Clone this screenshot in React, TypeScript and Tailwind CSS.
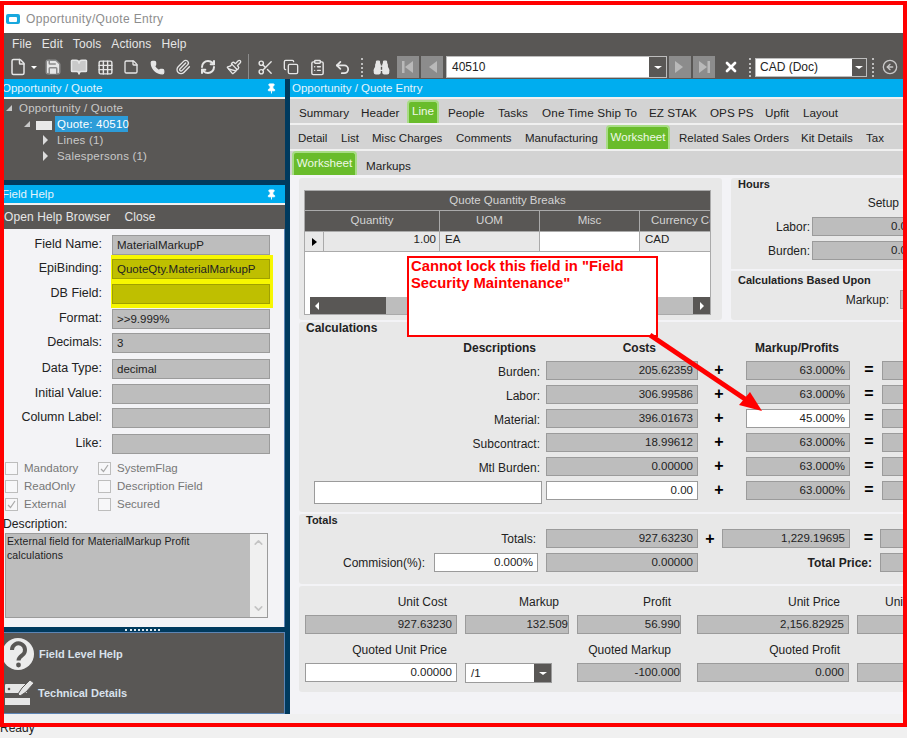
import React from "react";
import { File, Save, BookOpen, Grid3x3, StickyNote, Phone, Paperclip, RefreshCw, Paintbrush, Scissors, Copy, ClipboardList, Undo2, Binoculars, X, CircleArrowLeft, Pin, ChevronUp, ChevronDown } from "lucide-react";

const fieldBase = "h-[19px] shrink-0 border border-[#9b9b9b] leading-[16px] overflow-hidden whitespace-nowrap";

function Gray({ w, children, left }: { w: string; children?: React.ReactNode; left?: boolean }) {
  return <div className={`${fieldBase} ${w} bg-[#bdbdbd] text-[#222] ${left ? "text-left pl-1" : "text-right pr-1"}`}>{children}</div>;
}
function White({ w, children }: { w: string; children?: React.ReactNode }) {
  return <div className={`${fieldBase} ${w} bg-white text-[#222] text-right pr-1`}>{children}</div>;
}
function Caret({ w }: { w: string }) {
  return (
    <div className={`${w} h-full bg-[#595755] flex items-center justify-center shrink-0`}>
      <div className="w-0 h-0 border-x-[4px] border-x-transparent border-t-[3px] border-t-white" />
    </div>
  );
}
function Slot({ w, children }: { w: string; children: React.ReactNode }) {
  return <div className={`${w} h-[22px] flex items-center justify-center shrink-0 text-[#e6e6e6]`}>{children}</div>;
}
function Nav({ dir, bar }: { dir: "l" | "r"; bar?: boolean }) {
  return (
    <div className="w-[22px] h-[22px] bg-[#8c8c8c] flex items-center justify-center shrink-0">
      <svg width="14" height="14" viewBox="0 0 14 14" fill="#b9b9b9">
        {dir === "l" ? <polygon points="12,1 12,13 4,7" /> : <polygon points="2,1 2,13 10,7" />}
        {bar && (dir === "l" ? <rect x="1" y="1" width="2.5" height="12" /> : <rect x="10.5" y="1" width="2.5" height="12" />)}
      </svg>
    </div>
  );
}
function Dots({ ml }: { ml: string }) {
  return <div className={`${ml} w-[2px] h-[19px] border-l-2 border-dotted border-[#bdbdbd] shrink-0`} />;
}
function Header({ text, pad }: { text: string; pad: string }) {
  return (
    <div className={`h-[18px] bg-[#00adef] text-[#e4f4fb] text-[11.5px] leading-[18px] flex items-center justify-between ${pad} shrink-0`}>
      <span>{text}</span>
    </div>
  );
}
function PinHeader({ text }: { text: string }) {
  return (
    <div className="h-[18px] bg-[#00adef] text-[#e4f4fb] text-[11.5px] leading-[18px] flex items-center justify-between pl-[2px] pr-[8px] shrink-0">
      <span>{text}</span>
      <Pin size={11} className="text-white" fill="white" />
    </div>
  );
}
function FormRow({ label, value, h, olive }: { label: string; value?: string; h: string; olive?: boolean }) {
  return (
    <div className={`flex ${h} items-start`}>
      <div className="w-[98px] text-right text-[#222] text-[12.5px] leading-[18px] whitespace-nowrap">{label}</div>
      <div className={`ml-[10px] w-[158px] h-[20px] border ${olive ? "border-[#a0a000] bg-[#bfbf00]" : "border-[#9b9b9b] bg-[#bdbdbd]"} pl-[4px] leading-[18px] text-[#222] relative z-10`}>{value}</div>
    </div>
  );
}
function Check({ label, on, ml }: { label: string; on?: boolean; ml?: string }) {
  return (
    <div className={`flex items-center h-[13px] text-[#777] text-[11.5px] ${ml ?? ""}`}>
      <div className="w-[13px] h-[13px] border border-[#bdbdbd] flex items-center justify-center bg-[#f7f7f9] shrink-0">
        {on && (
          <svg width="11" height="11" viewBox="0 0 11 11" fill="none" stroke="#a8a8a8" strokeWidth="1.2"><polyline points="2,6 4.5,8.5 9,2" /></svg>
        )}
      </div>
      <span className="ml-[6px]">{label}</span>
    </div>
  );
}
function Plus() {
  return <span className="text-[16px] font-bold leading-[18px] text-black">+</span>;
}
function Eq() {
  return <span className="text-[16px] font-bold leading-[18px] text-black">=</span>;
}
function CalcRow({ label, cost, markup, white }: { label: string; cost: string; markup: string; white?: boolean }) {
  return (
    <div className="flex h-[19px] mb-[5px] items-center">
      <div className="w-[241px] shrink-0 text-right text-[#222] text-[12px] pt-[2px]">{label}:</div>
      <div className="ml-[6px] shrink-0"><Gray w="w-[152px]">{cost}</Gray></div>
      <div className="w-[42px] ml-[6px] text-center pr-[12px] shrink-0"><Plus /></div>
      {white ? <White w="w-[104px]">{markup}</White> : <Gray w="w-[104px]">{markup}</Gray>}
      <div className="w-[32px] text-center pl-[6px] shrink-0"><Eq /></div>
      <Gray w="w-[30px]" />
    </div>
  );
}
function Tab({ w, children, active, tw }: { w: string; children: React.ReactNode; active?: boolean; tw?: string }) {
  if (active) {
    return (
      <div className={`${w} h-full shrink-0 bg-[#69bc2b] border-x-2 border-t-2 border-[#a8dc86] rounded-t-[4px] text-[#eef8e6] text-center ${tw ?? ""}`}>
        {children}
      </div>
    );
  }
  return <div className={`${w} shrink-0 text-[#222] whitespace-nowrap self-center ${tw ?? ""}`}>{children}</div>;
}

export default function App() {
  return (
    <div className="relative w-[907px] h-[738px] overflow-hidden bg-[#f0f0f0] text-[11.5px] flex flex-col" style={{ fontFamily: '"Liberation Sans", Arial, sans-serif' }}>
      {/* title bar */}
      <div className="h-[33px] bg-white flex items-center pl-[6px] pt-[5px] shrink-0">
        <div className="w-[14px] h-[10px] rounded-[2px] bg-[#18a8de] flex items-center justify-center">
          <div className="w-[8px] h-[5px] bg-white rounded-[1px]" />
        </div>
        <span className="ml-[6px] text-[12px] text-[#8d8d8d] tracking-[0.35px]">Opportunity/Quote Entry</span>
      </div>

      {/* menu + toolbar */}
      <div className="h-[46px] bg-[#595755] shrink-0 text-[#e6e6e6]">
        <div className="h-[22px] flex items-center pl-[12px] gap-[10px] text-[12px] tracking-[0.1px]">
          <span>File</span><span>Edit</span><span>Tools</span><span>Actions</span><span>Help</span>
        </div>
        <div className="h-[24px] flex items-center pl-[9px]">
          <Slot w="w-[18px]"><File size={18} /></Slot>
          <div className="ml-[4px] w-0 h-0 border-x-[3px] border-x-transparent border-t-[3px] border-t-white" />
          <Slot w="w-[18px] ml-[7px]"><Save size={18} fill="#e6e6e6" stroke="#8c8c8c" /></Slot>
          <Slot w="w-[18px] ml-[8px]"><BookOpen size={18} fill="#c9c9c9" /></Slot>
          <Slot w="w-[18px] ml-[8px]"><Grid3x3 size={17} /></Slot>
          <Slot w="w-[18px] ml-[8px]"><StickyNote size={16} /></Slot>
          <Slot w="w-[18px] ml-[8px]"><Phone size={15} fill="#e6e6e6" /></Slot>
          <Slot w="w-[18px] ml-[8px]"><Paperclip size={16} /></Slot>
          <Slot w="w-[18px] ml-[7px]"><RefreshCw size={16} strokeWidth={3} /></Slot>
          <Slot w="w-[18px] ml-[8px]"><Paintbrush size={16} /></Slot>
          <div className="ml-[5px] w-px h-[26px] bg-[#8c8c8c]" />
          <Slot w="w-[18px] ml-[7px]"><Scissors size={17} /></Slot>
          <Slot w="w-[18px] ml-[8px]"><Copy size={16} /></Slot>
          <Slot w="w-[18px] ml-[8px]"><ClipboardList size={17} /></Slot>
          <Slot w="w-[18px] ml-[7px]"><Undo2 size={17} strokeWidth={2.5} /></Slot>
          <Dots ml="ml-[10px]" />
          <Slot w="w-[18px] ml-[9px]"><Binoculars size={17} fill="#e6e6e6" /></Slot>
          <div className="ml-[7px]"><Nav dir="l" bar /></div>
          <div className="ml-[2px]"><Nav dir="l" /></div>
          <div className="ml-[3px] w-[221px] h-[22px] bg-white border border-[#bdbdbd] flex text-[#222] text-[12px] leading-[20px] shrink-0">
            <span className="flex-1 pl-[5px]">40510</span>
            <Caret w="w-[17px]" />
          </div>
          <div className="ml-[2px]"><Nav dir="r" /></div>
          <div className="ml-[2px]"><Nav dir="r" bar /></div>
          <Slot w="w-[16px] ml-[8px]"><X size={18} strokeWidth={4} className="text-white" /></Slot>
          <Dots ml="ml-[10px]" />
          <div className="ml-[4px] w-[112px] h-[19px] bg-white border border-[#bdbdbd] flex text-[#222] text-[12px] leading-[17px] shrink-0">
            <span className="flex-1 pl-[4px]">CAD (Doc)</span>
            <Caret w="w-[14px]" />
          </div>
          <Dots ml="ml-[5px]" />
          <Slot w="w-[18px] ml-[7px]"><CircleArrowLeft size={16} className="text-[#c8c8c8]" /></Slot>
        </div>
      </div>

      {/* body */}
      <div className="flex h-[635px] shrink-0 bg-[#003a5e]">
        {/* left column */}
        <div className="w-[285px] shrink-0 flex flex-col">
          <PinHeader text="Opportunity / Quote" />
          <div className="h-[2px] bg-[#f0f0f0] shrink-0" />
          <div className="h-[81px] bg-[#595755] shrink-0 text-[#c8c8c8] text-[11.5px] leading-[16px] pt-[1px] tracking-[0.2px]">
            <div className="flex items-center h-[16px] pl-[6px]">
              <div className="w-0 h-0 border-l-[6px] border-l-transparent border-b-[6px] border-b-[#c8c8c8]" />
              <span className="ml-[7px]">Opportunity / Quote</span>
            </div>
            <div className="flex items-center h-[16px] pl-[24px]">
              <div className="w-0 h-0 border-l-[6px] border-l-transparent border-b-[6px] border-b-[#c8c8c8]" />
              <div className="ml-[6px] w-[16px] h-[11px] bg-[#e8e8e8] border-t-2 border-[#595755]" />
              <span className="ml-[3px] w-[73px] h-[16px] bg-[#2d9cd8] text-white pl-[2px] whitespace-nowrap">Quote: 40510</span>
            </div>
            <div className="flex items-center h-[16px] pl-[43px]">
              <div className="w-0 h-0 border-y-[5px] border-y-transparent border-l-[5px] border-l-[#dcdcdc]" />
              <span className="ml-[9px]">Lines (1)</span>
            </div>
            <div className="flex items-center h-[16px] pl-[43px]">
              <div className="w-0 h-0 border-y-[5px] border-y-transparent border-l-[5px] border-l-[#dcdcdc]" />
              <span className="ml-[9px]">Salespersons (1)</span>
            </div>
          </div>
          <div className="h-[5px] shrink-0" />
          <PinHeader text="Field Help" />
          <div className="h-[2px] bg-[#f0f0f0] shrink-0" />
          <div className="h-[24px] bg-[#595755] shrink-0 flex items-center pl-[4px] text-[#e6e6e6] text-[12px] tracking-[0.1px]">
            <span>Open Help Browser</span>
            <span className="ml-[14px]">Close</span>
          </div>
          <div className="h-[398px] bg-[#f3f3f6] border-r border-[#5d85b5] shrink-0 relative pl-[4px] pt-[6px]">
            <div className="absolute left-[111px] top-[26px] w-[162px] h-[53px] bg-[#f7f700]" />
            <FormRow label="Field Name:" value="MaterialMarkupP" h="h-[24px]" />
            <FormRow label="EpiBinding:" value="QuoteQty.MaterialMarkupP" h="h-[25px]" olive />
            <FormRow label="DB Field:" h="h-[25px]" olive />
            <FormRow label="Format:" value=">>9.999%" h="h-[24px]" />
            <FormRow label="Decimals:" value="3" h="h-[26px]" />
            <FormRow label="Data Type:" value="decimal" h="h-[25px]" />
            <FormRow label="Initial Value:" h="h-[24px]" />
            <FormRow label="Column Label:" h="h-[26px]" />
            <FormRow label="Like:" h="h-[28px]" />
            <div className="flex pl-px">
              <div className="flex flex-col gap-[5px] w-[93px]">
                <Check label="Mandatory" />
                <Check label="ReadOnly" />
                <Check label="External" on />
              </div>
              <div className="flex flex-col gap-[5px]">
                <Check label="SystemFlag" on />
                <Check label="Description Field" />
                <Check label="Secured" />
              </div>
            </div>
            <div className="mt-[6px] text-[#222] text-[12.2px] leading-[14px] -ml-[1px]">Description:</div>
            <div className="mt-[2px] ml-px w-[263px] h-[85px] border border-[#9b9b9b] bg-[#bdbdbd] flex">
              <div className="flex-1 pl-px text-[10.5px] leading-[14px] text-[#222] tracking-[0.1px]">
                <div className="w-[200px]">External field for MaterialMarkup Profit calculations</div>
              </div>
              <div className="w-[17px] bg-[#f0f0f0] flex flex-col justify-between items-center py-[2px] text-[#c4c4c4]">
                <ChevronUp size={13} strokeWidth={3} />
                <ChevronDown size={13} strokeWidth={3} />
              </div>
            </div>
          </div>
          <div className="h-[5px] shrink-0 flex justify-center items-center">
            <div className="w-[35px] border-t-2 border-dotted border-[#dfe8ee]" />
          </div>
          <div className="h-[82px] bg-[#595755] border border-[#5d85b5] shrink-0 text-[#d9e2ec] font-bold text-[11px]">
            <div className="flex items-center h-[40px] pl-[1px] mt-[1px]">
              <svg width="34" height="34" viewBox="0 0 34 34" className="shrink-0">
                <circle cx="16" cy="17" r="16" fill="#ececec" />
                <path d="M10 13a6.5 6.5 0 1 1 10.5 5c-2.5 1.8-4 2.8-4 5.5" fill="none" stroke="#595755" strokeWidth="4" />
                <circle cx="16.5" cy="28" r="2.4" fill="#595755" />
              </svg>
              <span className="ml-[3px]">Field Level Help</span>
            </div>
            <div className="flex items-center h-[38px] pl-[3px]">
              <svg width="30" height="28" viewBox="0 0 30 28" className="shrink-0">
                <rect x="1" y="5" width="22" height="9" rx="1" fill="#e6e6e6" />
                <rect x="1" y="19" width="25" height="7" fill="#e6e6e6" />
                <circle cx="5" cy="10" r="1.3" fill="#595755" />
                <polygon points="14,15 18,9 26,1 30,4 22,13 16,17" fill="#e6e6e6" stroke="#595755" />
              </svg>
              <span className="ml-[4px]">Technical Details</span>
            </div>
          </div>
          <div className="flex-1" />
        </div>

        <div className="w-[5px] shrink-0" />

        {/* right column */}
        <div className="flex-1 min-w-0 flex flex-col">
          <Header text="Opportunity / Quote Entry" pad="pl-[2px]" />
          <div className="h-[2px] bg-[#f0f0f0] shrink-0" />
          <div className="h-[24px] bg-[#d3d3d3] shrink-0 flex items-end pl-[9px] pt-px text-[11.7px]">
            <Tab w="w-[62px]" tw="pt-[2px]">Summary</Tab>
            <Tab w="w-[46px]" tw="pt-[2px]">Header</Tab>
            <Tab w="w-[32px]" active tw="leading-[18px]">Line</Tab>
            <Tab w="w-[50px] ml-[9px]" tw="pt-[2px]">People</Tab>
            <Tab w="w-[44px]" tw="pt-[2px]">Tasks</Tab>
            <Tab w="w-[107px]" tw="pt-[2px] tracking-[0.15px]">One Time Ship To</Tab>
            <Tab w="w-[61px]" tw="pt-[2px]">EZ STAK</Tab>
            <Tab w="w-[55px]" tw="pt-[2px]">OPS PS</Tab>
            <Tab w="w-[38px]" tw="pt-[2px]">Upfit</Tab>
            <Tab w="w-[50px]" tw="pt-[2px]">Layout</Tab>
          </div>
          <div className="h-[2px] bg-[#f0f0f0] shrink-0" />
          <div className="h-[24px] bg-[#d3d3d3] shrink-0 flex items-end pl-[8px] text-[11.5px]">
            <Tab w="w-[43px]" tw="pt-[4px]">Detail</Tab>
            <Tab w="w-[31px]" tw="pt-[4px]">List</Tab>
            <Tab w="w-[84px]" tw="pt-[4px]">Misc Charges</Tab>
            <Tab w="w-[69px]" tw="pt-[4px]">Comments</Tab>
            <Tab w="w-[81px]" tw="pt-[4px]">Manufacturing</Tab>
            <Tab w="w-[64px]" active tw="leading-[20px]">Worksheet</Tab>
            <Tab w="w-[122px] ml-[9px]" tw="pt-[4px]">Related Sales Orders</Tab>
            <Tab w="w-[65px]" tw="pt-[4px]">Kit Details</Tab>
            <Tab w="w-[30px]" tw="pt-[4px]">Tax</Tab>
          </div>
          <div className="h-[2px] bg-[#f0f0f0] shrink-0" />
          <div className="h-[24px] bg-[#d3d3d3] shrink-0 flex items-end pl-[2px] text-[11.7px]">
            <Tab w="w-[65px]" active tw="leading-[20px]">Worksheet</Tab>
            <Tab w="w-[60px] ml-[9px]" tw="pt-[6px]">Markups</Tab>
          </div>

          {/* content */}
          <div className="flex-1 bg-[#f3f3f6] pl-[9px] pt-[3px] flex flex-col gap-[2px] overflow-hidden">
            {/* top panels */}
            <div className="flex h-[142px] gap-[9px] shrink-0">
              <div className="w-[423px] bg-[#e8e8e8] rounded-[3px] pl-[5px] pt-[12px]">
                <div className="w-[407px] h-[125px] bg-white border border-[#aaa] flex flex-col overflow-hidden">
                  <div className="h-[20px] bg-[#595755] text-[#d4d4d4] text-center leading-[19px] border-b border-[#aaa] shrink-0">Quote Quantity Breaks</div>
                  <div className="h-[20px] bg-[#595755] text-[#d4d4d4] flex leading-[19px] text-center shrink-0">
                    <div className="w-[135px] border-r border-[#aaa] shrink-0">Quantity</div>
                    <div className="w-[100px] border-r border-[#aaa] shrink-0">UOM</div>
                    <div className="w-[100px] border-r border-[#aaa] shrink-0">Misc</div>
                    <div className="w-[70px] pl-[11px] text-left whitespace-nowrap shrink-0 overflow-hidden">Currency Code</div>
                  </div>
                  <div className="h-[21px] flex border-y border-[#aaa] text-[#222] leading-[15px] shrink-0">
                    <div className="w-[19px] bg-[#e8e8e8] border-r border-[#aaa] flex items-center justify-center shrink-0">
                      <div className="w-0 h-0 border-y-[4px] border-y-transparent border-l-[5px] border-l-black" />
                    </div>
                    <div className="w-[116px] bg-[#e8e8e8] border-r border-[#aaa] text-right pr-[3px] shrink-0">1.00</div>
                    <div className="w-[100px] bg-[#e8e8e8] border-r border-[#aaa] pl-[5px] shrink-0">EA</div>
                    <div className="w-[100px] bg-white border-r border-[#aaa] shrink-0" />
                    <div className="flex-1 bg-[#e8e8e8] pl-[5px]">CAD</div>
                  </div>
                  <div className="flex-1" />
                  <div className="h-[17px] flex bg-[#bdbdbd] shrink-0">
                    <div className="w-[5px] bg-white" />
                    <div className="w-[76px] bg-[#595755] flex items-center pl-[5px]">
                      <div className="w-0 h-0 border-y-[4px] border-y-transparent border-r-[4px] border-r-white" />
                    </div>
                    <div className="flex-1" />
                    <div className="w-[17px] bg-[#595755] flex items-center justify-center">
                      <div className="w-0 h-0 border-y-[4px] border-y-transparent border-l-[4px] border-l-white" />
                    </div>
                  </div>
                </div>
              </div>
              <div className="flex-1 bg-[#e8e8e8] rounded-[3px] pl-[7px] text-[#222] min-w-0 overflow-hidden">
                <div className="font-bold text-[11px] leading-[13px]">Hours</div>
                <div className="text-right pr-[8px] leading-[14px] mt-[5px] text-[12px]">Setup</div>
                <div className="flex items-center mt-[7px] h-[19px]">
                  <div className="w-[72px] text-right text-[12px] shrink-0">Labor:</div>
                  <div className="ml-[2px] shrink-0"><Gray w="w-[100px]">0.0</Gray></div>
                </div>
                <div className="flex items-center mt-[5px] h-[19px]">
                  <div className="w-[72px] text-right text-[12px] shrink-0">Burden:</div>
                  <div className="ml-[2px] shrink-0"><Gray w="w-[100px]">0.0</Gray></div>
                </div>
                <div className="h-[2px] bg-[#f3f3f6] -ml-[7px] mt-[9px]" />
                <div className="font-bold text-[11px] leading-[13px] mt-[3px]">Calculations Based Upon</div>
                <div className="flex items-center mt-[3px] h-[19px]">
                  <div className="w-[151px] text-right text-[12px] shrink-0">Markup:</div>
                  <div className="ml-[11px] shrink-0"><Gray w="w-[30px]" /></div>
                </div>
              </div>
            </div>

            {/* calculations */}
            <div className="h-[190px] bg-[#e8e8e8] rounded-[3px] shrink-0 overflow-hidden">
              <div className="font-bold text-[12px] leading-[12px] pl-[7px] text-[#222]">Calculations</div>
              <div className="flex h-[19px] mt-[5px] font-bold text-[12px] text-[#222] leading-[19px]">
                <div className="w-[237px] text-right shrink-0">Descriptions</div>
                <div className="w-[120px] text-right shrink-0">Costs</div>
                <div className="w-[183px] text-right shrink-0">Markup/Profits</div>
              </div>
              <div className="mt-[3px]">
                <CalcRow label="Burden" cost="205.62359" markup="63.000%" />
                <CalcRow label="Labor" cost="306.99586" markup="63.000%" />
                <CalcRow label="Material" cost="396.01673" markup="45.000%" white />
                <CalcRow label="Subcontract" cost="18.99612" markup="63.000%" />
                <CalcRow label="Mtl Burden" cost="0.00000" markup="63.000%" />
                <div className="flex h-[19px] items-start">
                  <div className="ml-[15px] w-[228px] h-[23px] bg-white border border-[#9b9b9b] shrink-0" />
                  <div className="ml-[4px] shrink-0"><White w="w-[152px]">0.00</White></div>
                  <div className="w-[42px] ml-[6px] text-center pr-[12px] shrink-0"><Plus /></div>
                  <Gray w="w-[104px]">63.000%</Gray>
                  <div className="w-[32px] text-center pl-[6px] shrink-0"><Eq /></div>
                  <Gray w="w-[30px]" />
                </div>
              </div>
            </div>

            {/* totals */}
            <div className="h-[70px] bg-[#e8e8e8] rounded-[3px] shrink-0 overflow-hidden text-[#222]">
              <div className="font-bold text-[11px] leading-[12px] pl-[7px] h-[15px]">Totals</div>
              <div className="flex h-[19px] items-center">
                <div className="w-[237px] text-right shrink-0 text-[12px]">Totals:</div>
                <div className="ml-[10px] shrink-0"><Gray w="w-[152px]">927.63230</Gray></div>
                <div className="w-[24px] text-center pt-[3px] shrink-0"><Plus /></div>
                <Gray w="w-[128px]">1,229.19695</Gray>
                <div className="w-[30px] text-center pl-[7px] shrink-0"><Eq /></div>
                <Gray w="w-[30px]" />
              </div>
              <div className="flex h-[19px] items-center mt-[5px]">
                <div className="w-[126px] text-right shrink-0 text-[12px]">Commision(%):</div>
                <div className="ml-[9px] shrink-0"><White w="w-[104px]">0.000%</White></div>
                <div className="ml-[8px] shrink-0"><Gray w="w-[152px]">0.00000</Gray></div>
                <div className="w-[174px] text-right font-bold text-[12px] shrink-0">Total Price:</div>
                <div className="ml-[8px] shrink-0"><Gray w="w-[30px]" /></div>
              </div>
            </div>

            {/* bottom */}
            <div className="h-[106px] bg-[#e8e8e8] rounded-[3px] shrink-0 overflow-hidden pl-[6px] text-[#222] text-[12px]">
              <div className="flex h-[29px] items-end pb-[6px] leading-[14px]">
                <div className="w-[152px] text-right pr-[10px] shrink-0">Unit Cost</div>
                <div className="w-[104px] ml-[8px] text-right pr-[10px] shrink-0">Markup</div>
                <div className="w-[104px] ml-[8px] text-right pr-[10px] shrink-0">Profit</div>
                <div className="w-[152px] ml-[16px] text-right pr-[9px] shrink-0">Unit Price</div>
                <div className="w-[50px] ml-[8px] pl-[28px] shrink-0 overflow-hidden">Unit</div>
              </div>
              <div className="flex h-[19px] text-[11.5px]">
                <Gray w="w-[152px]">927.63230</Gray>
                <div className="ml-[8px] shrink-0"><Gray w="w-[104px]"><span className="-mr-[4px]">132.509</span></Gray></div>
                <div className="ml-[8px] shrink-0"><Gray w="w-[104px]"><span className="-mr-[4px]">56.990</span></Gray></div>
                <div className="ml-[16px] shrink-0"><Gray w="w-[152px]">2,156.82925</Gray></div>
                <div className="ml-[8px] shrink-0"><Gray w="w-[50px]" /></div>
              </div>
              <div className="flex h-[29px] items-end pb-[6px] leading-[14px]">
                <div className="w-[152px] text-right pr-[10px] shrink-0">Quoted Unit Price</div>
                <div className="w-[216px] ml-[8px] text-right pr-[10px] shrink-0">Quoted Markup</div>
                <div className="w-[152px] ml-[16px] text-right pr-[9px] shrink-0">Quoted Profit</div>
              </div>
              <div className="flex h-[19px] text-[11.5px]">
                <White w="w-[152px]">0.00000</White>
                <div className="ml-[8px] w-[87px] h-[20px] bg-white border border-[#9b9b9b] flex shrink-0">
                  <span className="flex-1 pl-[5px] leading-[18px]">/1</span>
                  <Caret w="w-[17px]" />
                </div>
                <div className="ml-[25px] shrink-0"><Gray w="w-[104px]"><span className="-mr-[4px]">-100.000</span></Gray></div>
                <div className="ml-[16px] shrink-0"><Gray w="w-[152px]">0.000</Gray></div>
                <div className="ml-[8px] shrink-0"><Gray w="w-[50px]" /></div>
              </div>
            </div>
          </div>
        </div>
      </div>

      {/* status bar */}
      <div className="flex-1 bg-[#f0f0f0] flex items-end text-[12px] text-[#222] leading-[14px]">
        <span className="mb-[3px]">Ready</span>
      </div>

      {/* annotation overlays */}
      <div className="absolute left-[407px] top-[256px] w-[251px] h-[81px] border-2 border-[#f00] bg-white z-20 text-[#f00] font-bold text-[14.8px] leading-[17px] px-[2px]">
        Cannot lock this field in "Field Security Maintenance"
      </div>
      <svg className="absolute left-0 top-0 z-20 pointer-events-none" width="907" height="738">
        <line x1="650" y1="335" x2="745" y2="399" stroke="#f00" strokeWidth="5" />
        <polygon points="762,411 739,405 750,392" fill="#f00" />
      </svg>
      <div className="absolute left-0 top-px w-[907px] h-[726px] border-4 border-[#f00] z-30 pointer-events-none" />
    </div>
  );
}
